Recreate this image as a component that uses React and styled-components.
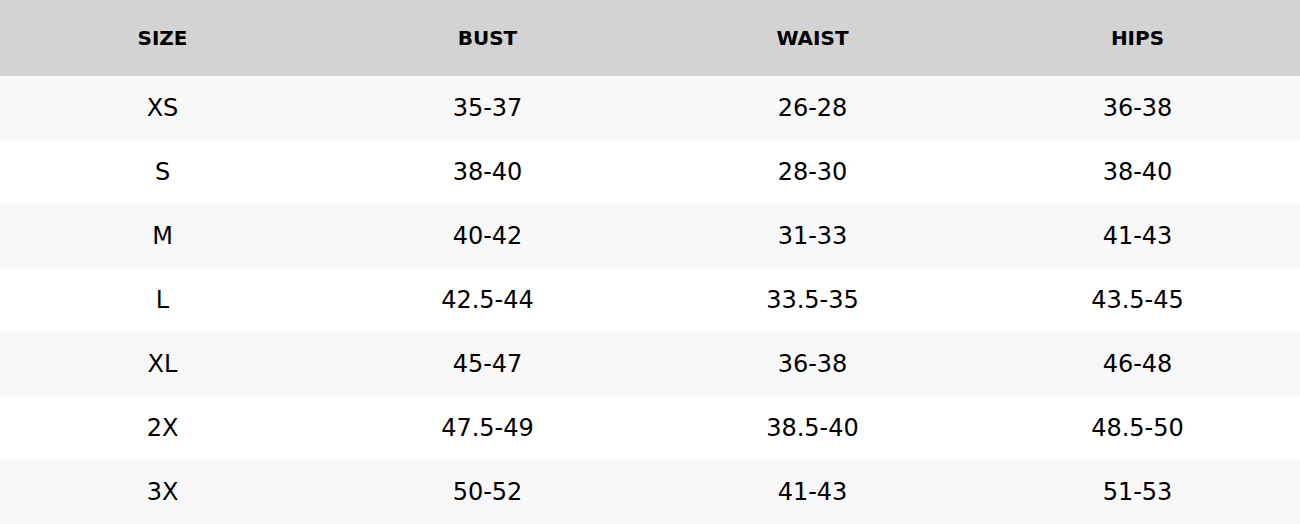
import React from "react";
import styled, { createGlobalStyle } from "styled-components";

const Global = createGlobalStyle`
  html, body { margin: 0; padding: 0; background: #ffffff; }
  body { font-family: "DejaVu Sans", "Liberation Sans", sans-serif; color: #111; }
`;

const Table = styled.table`
  width: 1300px;
  border-collapse: collapse;
  table-layout: fixed;
`;

const HeadCell = styled.th`
  background: #d3d3d3;
  height: 76px;
  padding: 0;
  font-size: 20px;
  font-weight: bold;
  text-align: center;
  vertical-align: middle;
  color: #000;
`;

const Row = styled.tr`
  background: ${(p) => (p.$alt ? "#f8f8f8" : "#ffffff")};
`;

const Cell = styled.td`
  height: 64px;
  padding: 0;
  font-size: 24px;
  text-align: center;
  vertical-align: middle;
  color: #000;
`;

const headers = ["SIZE", "BUST", "WAIST", "HIPS"];
const rows = [
  ["XS", "35-37", "26-28", "36-38"],
  ["S", "38-40", "28-30", "38-40"],
  ["M", "40-42", "31-33", "41-43"],
  ["L", "42.5-44", "33.5-35", "43.5-45"],
  ["XL", "45-47", "36-38", "46-48"],
  ["2X", "47.5-49", "38.5-40", "48.5-50"],
  ["3X", "50-52", "41-43", "51-53"],
];

export default function App() {
  return (
    <>
      <Global />
      <Table>
        <thead>
          <tr>
            {headers.map((h) => (
              <HeadCell key={h}>{h}</HeadCell>
            ))}
          </tr>
        </thead>
        <tbody>
          {rows.map((r, i) => (
            <Row key={r[0]} $alt={i % 2 === 0}>
              {r.map((c, j) => (
                <Cell key={j}>{c}</Cell>
              ))}
            </Row>
          ))}
        </tbody>
      </Table>
    </>
  );
}
